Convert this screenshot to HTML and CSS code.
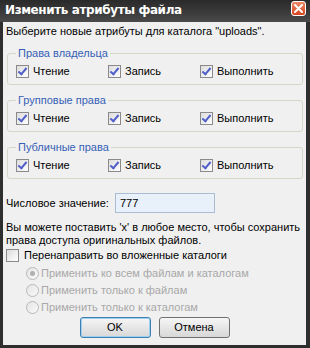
FILE: index.html
```html
<!DOCTYPE html>
<html lang="ru">
<head>
    <meta charset="utf-8">
    <link rel="stylesheet" href="styles.css">
</head>
<body>
    <div class="window">
        <div class="titlebar">
            <span class="title">Изменить атрибуты файла</span>
            <span class="close-btn">
                <svg width="9" height="9" viewBox="0 0 9 9"><path d="M1 1 L8 8 M8 1 L1 8" stroke="#fff" stroke-width="2" stroke-linecap="round"/></svg>
            </span>
        </div>
        <div class="frame">
            <div class="content">
                <p class="intro">Выберите новые атрибуты для каталога "uploads".</p>

                <fieldset class="group">
                    <legend>Права владельца</legend>
                    <div class="perm-row">
                        <label class="check"><span class="box checked"></span>Чтение</label>
                        <label class="check"><span class="box checked"></span>Запись</label>
                        <label class="check"><span class="box checked"></span>Выполнить</label>
                    </div>
                </fieldset>

                <fieldset class="group">
                    <legend>Групповые права</legend>
                    <div class="perm-row">
                        <label class="check"><span class="box checked"></span>Чтение</label>
                        <label class="check"><span class="box checked"></span>Запись</label>
                        <label class="check"><span class="box checked"></span>Выполнить</label>
                    </div>
                </fieldset>

                <fieldset class="group">
                    <legend>Публичные права</legend>
                    <div class="perm-row">
                        <label class="check"><span class="box checked"></span>Чтение</label>
                        <label class="check"><span class="box checked"></span>Запись</label>
                        <label class="check"><span class="box checked"></span>Выполнить</label>
                    </div>
                </fieldset>

                <div class="numeric-row">
                    <span>Числовое значение:</span>
                    <span class="num-input">777</span>
                </div>

                <p class="hint">Вы можете поставить 'x' в любое место, чтобы сохранить права доступа оригинальных файлов.</p>

                <label class="check recurse"><span class="box"></span>Перенаправить во вложенные каталоги</label>

                <div class="radios">
                    <label class="radio"><span class="dot selected"></span>Применить ко всем файлам и каталогам</label>
                    <label class="radio"><span class="dot"></span>Применить только к файлам</label>
                    <label class="radio"><span class="dot"></span>Применить только к каталогам</label>
                </div>

                <div class="buttons">
                    <span class="btn default">OK</span>
                    <span class="btn">Отмена</span>
                </div>
            </div>
        </div>
    </div>
</body>
</html>
```

FILE: styles.css
```css
body {
    margin: 0;
    padding: 0;
    font-family: 'Liberation Sans', Arial, sans-serif;
    font-size: 11px;
    color: #000;
    background: #fff;
}

.window {
    width: 310px;
    height: 348px;
    display: flex;
    flex-direction: column;
}

.titlebar {
    height: 22px;
    flex-shrink: 0;
    display: flex;
    align-items: center;
    justify-content: space-between;
    padding: 0 4px 0 5px;
    background: linear-gradient(#2a2a2a, #3c3c3c 60%, #4a4a4a);
    box-sizing: border-box;
}

.title {
    color: #fff;
    font-family: 'DejaVu Sans', sans-serif;
    font-weight: bold;
    font-size: 12px;
    letter-spacing: -0.4px;
    margin-top: -2px;
}

.close-btn {
    width: 13px;
    height: 13px;
    margin-top: -5px;
    border: 1px solid #fff;
    border-radius: 3px;
    background: linear-gradient(#ee8866, #d84420);
    display: flex;
    align-items: center;
    justify-content: center;
}

.frame {
    flex: 1;
    background: #f0f0f0;
    border-left: 3px solid #2e2e2e;
    border-right: 4px solid #2e2e2e;
    border-bottom: 3px solid #2e2e2e;
}

.content {
    padding: 2px 3px 0 3px;
}

.intro {
    margin: 0;
    line-height: 14px;
}

.group {
    margin: 8px 0 0 1px;
    padding: 5px 8px 6px 8px;
    border: 1px solid #d5d5c8;
    border-radius: 3px;
}

.group legend {
    color: #3560b5;
    padding: 0 2px;
    line-height: 14px;
}

.perm-row {
    display: grid;
    grid-template-columns: 92px 92px 92px;
}

.check {
    display: flex;
    align-items: center;
    gap: 4px;
    line-height: 13px;
}

.box {
    width: 11px;
    height: 11px;
    border: 1px solid #8a8a8a;
    background: linear-gradient(135deg, #dcdcdc, #fff);
    position: relative;
}

.box.checked::after {
    content: '';
    position: absolute;
    left: 3px;
    top: 0px;
    width: 3px;
    height: 7px;
    border-right: 2px solid #5060c8;
    border-bottom: 2px solid #5060c8;
    transform: rotate(40deg);
}

.numeric-row {
    display: flex;
    align-items: center;
    gap: 6px;
    margin-top: 14px;
}

.num-input {
    width: 94px;
    height: 18px;
    line-height: 18px;
    padding-left: 4px;
    border: 1px solid #a9bcd4;
    background: #e8f0fa;
}

.hint {
    margin: 8px 0 0 0;
    line-height: 13px;
}

.recurse {
    margin-top: 2px;
    gap: 5px;
}

.radios {
    display: flex;
    flex-direction: column;
    gap: 4px;
    margin: 5px 0 0 20px;
}

.radio {
    display: flex;
    align-items: center;
    gap: 2px;
    color: #a8a8a8;
    line-height: 13px;
}

.dot {
    width: 11px;
    height: 11px;
    border: 1px solid #b8b8b8;
    border-radius: 50%;
    background: linear-gradient(135deg, #e4e4e4, #fafafa);
    display: flex;
    align-items: center;
    justify-content: center;
}

.dot.selected::after {
    content: '';
    width: 5px;
    height: 5px;
    border-radius: 50%;
    background: #b0b0b0;
}

.buttons {
    display: flex;
    justify-content: center;
    gap: 8px;
    margin-top: 3px;
}

.btn {
    width: 69px;
    height: 19px;
    line-height: 19px;
    text-align: center;
    border: 1px solid #707070;
    border-radius: 3px;
    background: linear-gradient(#f6f6f6, #e6e6e6 50%, #d8d8d8);
}

.btn.default {
    border-color: #3c7fb1;
    box-shadow: inset 0 0 0 1px #9fd0f0;
}
```
